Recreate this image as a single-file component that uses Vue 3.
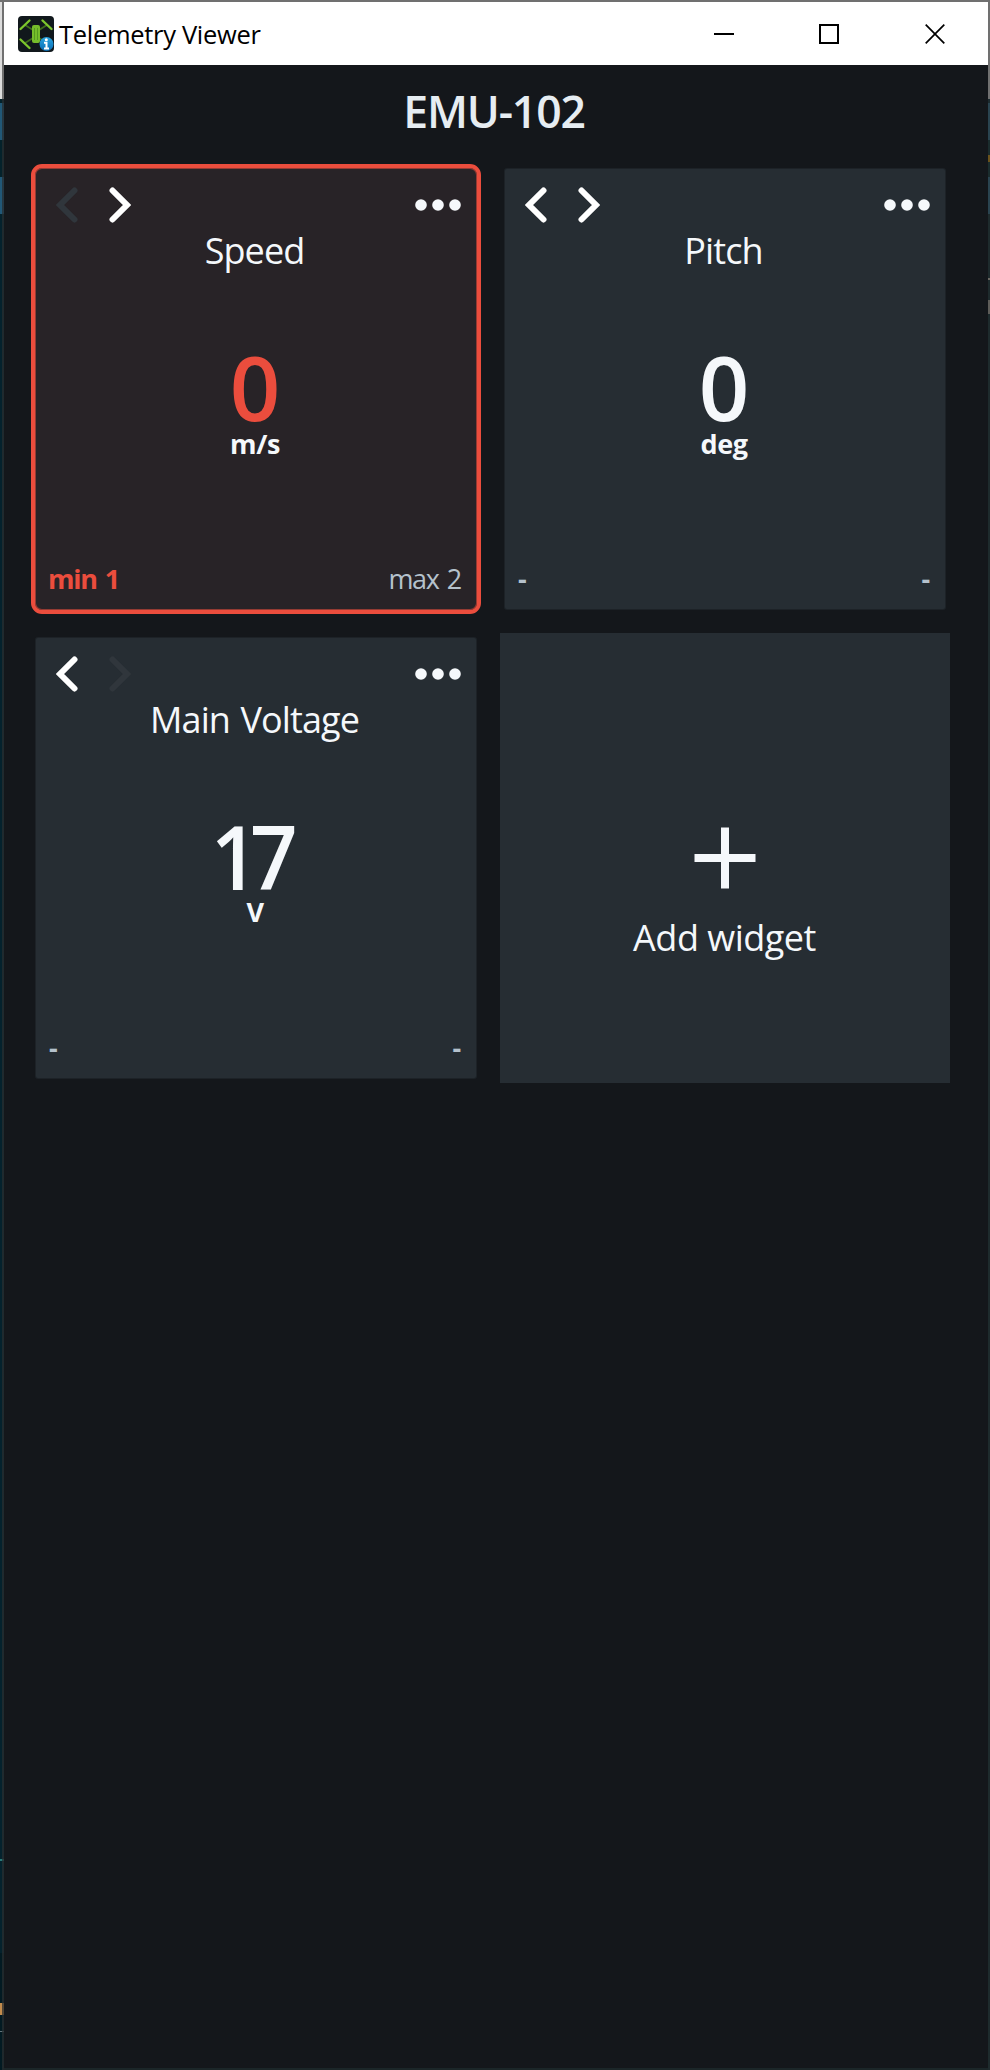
<script setup>
const widgets = [
  { name: 'Speed', value: '0', unit: 'm/s', min: 'min 1', max: 'max 2', prev: false, next: true, alert: true, key: 'speed' },
  { name: 'Pitch', value: '0', unit: 'deg', min: '-', max: '-', prev: true, next: true, alert: false, key: 'pitch' },
  { name: 'Main Voltage', value: '17', unit: 'V', min: '-', max: '-', prev: true, next: false, alert: false, key: 'voltage' }
]
</script>

<template>
  <div class="desktop">
    <div class="edge edge-left"></div>
    <main class="window">
      <header class="titlebar">
        <svg class="logo" width="36" height="36" viewBox="0 0 36 36">
          <defs>
            <linearGradient id="badge" x1="0" y1="0" x2="0" y2="1">
              <stop offset="0" stop-color="#27a3df" />
              <stop offset="1" stop-color="#0b6db4" />
            </linearGradient>
          </defs>
          <rect width="36" height="36" rx="4" fill="#11181c" />
          <g stroke="#3f6b1c" stroke-width="1.800">
            <path d="M7 9 L15 14 M29 9 L21 14 M7 27 L15 22 M29 27 L21 22" />
          </g>
          <g stroke="#7cc62c" stroke-width="2.400" stroke-linecap="round">
            <path d="M2.500 13 L11.500 4.500 M24.500 4.500 L33.500 13 M2.500 23.500 L11.500 32" />
          </g>
          <rect x="14" y="9" width="8" height="18" rx="2" fill="#76bd2b" />
          <path d="M16.500 12 V24 M19.500 12 V24" stroke="#549b20" stroke-width="1" />
          <circle cx="28.500" cy="28" r="7" fill="url(#badge)" />
          <circle cx="28.300" cy="23.700" r="1.500" fill="#fff" />
          <path d="M26 26.700 H28.500 V32 M26 32.500 H31" stroke="#fff" stroke-width="2" fill="none" />
        </svg>
        <span class="app-name">Telemetry Viewer</span>
        <div class="controls">
          <svg width="20" height="20" viewBox="0 0 20 20"><path d="M0 10 H20" stroke="#000" stroke-width="2" /></svg>
          <svg width="20" height="20" viewBox="0 0 20 20"><rect x="1" y="1" width="18" height="18" fill="none" stroke="#000" stroke-width="2" /></svg>
          <svg class="close" width="20" height="20" viewBox="0 0 20 20"><path d="M.7 .7 L19.300 19.300 M19.300 .7 L.7 19.300" stroke="#000" stroke-width="1.700" /></svg>
        </div>
      </header>

      <h1 class="device">EMU-102</h1>

      <section class="grid">
        <article v-for="w in widgets" :key="w.key" class="card" :class="[w.key, { alert: w.alert }]">
          <nav class="nav">
            <svg class="arrow" :class="{ off: !w.prev }" width="22" height="36" viewBox="0 0 22 36">
              <path d="M18.500 3.500 L4 18 L18.500 32.500" />
            </svg>
            <svg class="arrow" :class="{ off: !w.next }" width="22" height="36" viewBox="0 0 22 36">
              <path d="M3.500 3.500 L18 18 L3.500 32.500" />
            </svg>
            <svg class="more" width="46" height="12" viewBox="0 0 46 12">
              <circle cx="6" cy="6" r="5.800" /><circle cx="23" cy="6" r="5.800" /><circle cx="40" cy="6" r="5.800" />
            </svg>
          </nav>
          <h2 class="name">{{ w.name }}</h2>
          <div class="value">{{ w.value }}</div>
          <div class="unit">{{ w.unit }}</div>
          <footer class="limits" :class="{ unset: w.min === '-' }">
            <span class="min">{{ w.min }}</span>
            <span class="max">{{ w.max }}</span>
          </footer>
        </article>

        <button class="add">
          <svg width="62" height="62" viewBox="0 0 62 62"><path d="M31 .5 V61.500 M.5 31 H61.500" stroke="#f5f8fb" stroke-width="8" /></svg>
          <span>Add widget</span>
        </button>
      </section>
    </main>
    <div class="edge edge-right"></div>
  </div>
</template>

<style>
html, body { margin: 0; background: #14171b; }
</style>

<style scoped>
.desktop {
  display: grid;
  grid-template-columns: 4px 984px 2px;
  width: 990px;
  height: 2070px;
  box-sizing: border-box;
  border-top: 2px solid #707070;
  background: #14171b;
  font-family: "Open Sans", "Noto Sans", sans-serif;
  color: #f5f8fb;
}
.edge-left {
  background:
    linear-gradient(#707070 97px, rgba(40, 45, 47, .75) 97px) 2px 0 / 2px 100% no-repeat,
    linear-gradient(#dcdcdc 97px, #04222b 97px 101px, #215877 101px 138px, #04222b 138px 175px, #215877 175px 212px, #04222d 212px 1857px, #297a78 1857px 1859px, #04222d 1859px 1951px, #021a22 1951px 2001px, #c28b4c 2001px 2013px, #021a22 2013px 2029px, #64747b 2029px 2030px, #021a22 2030px);
}
.edge-right {
  background: linear-gradient(#707070 97px, #1c2b2f 97px 101px, #2a4450 101px 138px, #1b2d2e 138px 153px, #6b531c 153px 160px, #1b2d2e 160px 175px, #2a4450 175px 212px, #1e2b2d 212px 276px, #6b6963 276px 278px, #1e2b2d 278px 298px, #5e5d59 298px 312px, #1e2b2d 312px);
}
.window { display: flex; flex-direction: column; background: #14171b; border-bottom: 2px solid #1b2628; }
.titlebar { display: flex; align-items: center; height: 63px; background: #fff; color: #000; }
.logo { margin-left: 14px; }
.app-name { margin-left: 5px; font-size: 25.500px; line-height: 36px; letter-spacing: -.3px; white-space: nowrap; }
.controls { display: flex; gap: 85px; margin-left: auto; margin-right: 43px; }
.controls svg { display: block; }
.controls .close { margin-left: 1px; }
.device {
  margin: 16px 0 0;
  padding-right: 4px;
  height: 83px;
  font-size: 44.500px;
  font-weight: 600;
  line-height: 60px;
  letter-spacing: -1.150px;
  text-align: center;
  color: #e6edf2;
}
.grid { display: grid; grid-template-columns: 450px 450px; grid-auto-rows: 450px; gap: 19px; margin-left: 27px; }
.card {
  display: flex;
  flex-direction: column;
  box-sizing: border-box;
  margin: 5px;
  border-radius: 2px;
  background: #262d33;
  box-shadow: 0 0 0 1px rgba(38, 45, 51, .5);
}
.alert {
  margin: 0;
  padding: 1px;
  border: 4px solid #eb4d3d;
  border-radius: 11px;
  background: #282327;
  box-shadow: inset 0 0 0 1px #943b33;
}
.nav { display: flex; align-items: center; padding: 18px 15px 0 20px; }
.arrow { fill: none; stroke: #fff; stroke-width: 6; stroke-linecap: round; stroke-linejoin: miter; margin-right: 31px; }
.off { stroke: #30363c; }
.more { margin-left: auto; fill: #f5f8fb; }
.name { margin: 6px 0 0; padding-right: 3px; font-size: 36px; font-weight: 400; line-height: 44px; letter-spacing: -.9px; word-spacing: 2px; text-align: center; }
.value { margin-top: 69px; padding-right: 14px; font-size: 88.500px; font-weight: 600; line-height: 90px; letter-spacing: -12px; text-align: center; }
.voltage .value { padding-right: 13px; letter-spacing: -9px; transform: scaleX(.94); }
.unit { margin-top: 1px; padding-right: 2px; font-size: 27px; font-weight: 700; line-height: 22px; letter-spacing: -.4px; text-align: center; }
.voltage .unit { margin-top: 0; }
.alert .value, .alert .min { color: #eb4d3d; }
.limits {
  display: flex;
  justify-content: space-between;
  margin-top: auto;
  padding: 0 15px 14px 12px;
  font-size: 27px;
  line-height: 32px;
  letter-spacing: -1.300px;
  word-spacing: 2.500px;
  color: #b5c1cc;
}
.unset { font-weight: 700; padding: 0 16px 14px 13px; }
.alert .min { font-weight: 700; }
.add {
  display: flex;
  flex-direction: column;
  align-items: center;
  padding: 194px 1px 0 0;
  border: 0;
  background: #262d33;
  color: inherit;
  font: 400 36px/44px "Open Sans", "Noto Sans", sans-serif;
  letter-spacing: -.5px;
}
.add svg { display: block; }
.add span { margin-top: 27px; }
</style>
